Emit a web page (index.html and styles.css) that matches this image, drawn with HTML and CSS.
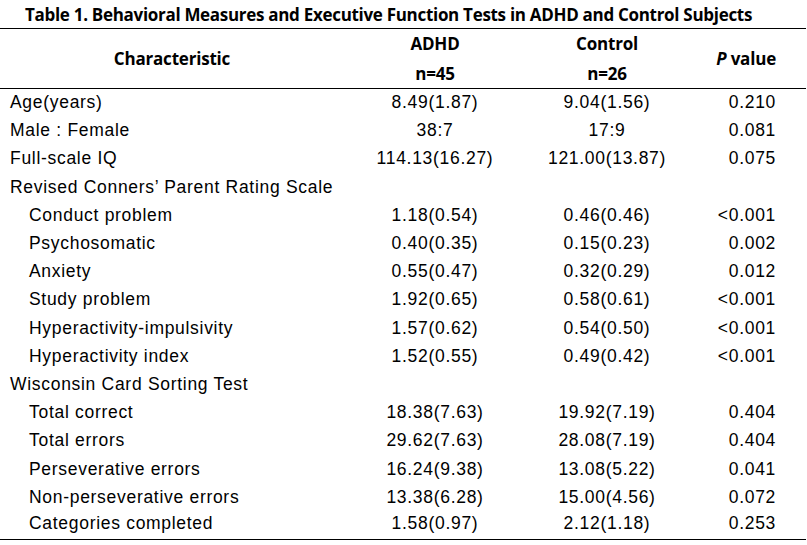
FILE: index.html
```html
<!DOCTYPE html>
<html>
<head>
<meta charset="utf-8">
<link rel="stylesheet" href="styles.css">
</head>
<body>
<div class="title">Table 1. Behavioral Measures and Executive Function Tests in ADHD and Control Subjects</div>
<table class="data">
  <colgroup>
    <col class="c-label">
    <col class="c-adhd">
    <col class="c-ctrl">
    <col class="c-p">
  </colgroup>
  <thead>
    <tr class="h1">
      <th rowspan="2" class="h-char">Characteristic</th>
      <th>ADHD</th>
      <th>Control</th>
      <th rowspan="2" class="h-p"><i>P</i> value</th>
    </tr>
    <tr class="h2">
      <th>n=45</th>
      <th>n=26</th>
    </tr>
  </thead>
  <tbody>
    <tr><td class="lab">Age(years)</td><td>8.49(1.87)</td><td>9.04(1.56)</td><td class="p">0.210</td></tr>
    <tr><td class="lab">Male : Female</td><td>38:7</td><td>17:9</td><td class="p">0.081</td></tr>
    <tr><td class="lab">Full-scale IQ</td><td>114.13(16.27)</td><td>121.00(13.87)</td><td class="p">0.075</td></tr>
    <tr><td class="lab">Revised Conners’ Parent Rating Scale</td><td></td><td></td><td class="p"></td></tr>
    <tr><td class="lab sub">Conduct problem</td><td>1.18(0.54)</td><td>0.46(0.46)</td><td class="p">&lt;0.001</td></tr>
    <tr><td class="lab sub">Psychosomatic</td><td>0.40(0.35)</td><td>0.15(0.23)</td><td class="p">0.002</td></tr>
    <tr><td class="lab sub">Anxiety</td><td>0.55(0.47)</td><td>0.32(0.29)</td><td class="p">0.012</td></tr>
    <tr><td class="lab sub">Study problem</td><td>1.92(0.65)</td><td>0.58(0.61)</td><td class="p">&lt;0.001</td></tr>
    <tr><td class="lab sub">Hyperactivity-impulsivity</td><td>1.57(0.62)</td><td>0.54(0.50)</td><td class="p">&lt;0.001</td></tr>
    <tr><td class="lab sub">Hyperactivity index</td><td>1.52(0.55)</td><td>0.49(0.42)</td><td class="p">&lt;0.001</td></tr>
    <tr><td class="lab">Wisconsin Card Sorting Test</td><td></td><td></td><td class="p"></td></tr>
    <tr><td class="lab sub">Total correct</td><td>18.38(7.63)</td><td>19.92(7.19)</td><td class="p">0.404</td></tr>
    <tr><td class="lab sub">Total errors</td><td>29.62(7.63)</td><td>28.08(7.19)</td><td class="p">0.404</td></tr>
    <tr><td class="lab sub">Perseverative errors</td><td>16.24(9.38)</td><td>13.08(5.22)</td><td class="p">0.041</td></tr>
    <tr><td class="lab sub">Non-perseverative errors</td><td>13.38(6.28)</td><td>15.00(4.56)</td><td class="p">0.072</td></tr>
    <tr><td class="lab sub">Categories completed</td><td>1.58(0.97)</td><td>2.12(1.18)</td><td class="p">0.253</td></tr>
  </tbody>
</table>
</body>
</html>
```

FILE: styles.css
```css
html, body {
  margin: 0;
  padding: 0;
  background: #ffffff;
  color: #000000;
}

.title {
  height: 28px;
  line-height: 30px;
  padding-left: 25px;
  font-family: "Open Sans", "Liberation Sans", sans-serif;
  font-weight: 700;
  font-size: 17px;
  letter-spacing: -0.3px;
  white-space: nowrap;
}

.data {
  width: 806px;
  border-collapse: collapse;
  font-family: "Liberation Sans", Arial, sans-serif;
  font-size: 17.5px;
  letter-spacing: 0.7px;
}

.c-label { width: 350px; }
.c-adhd { width: 170px; }
.c-ctrl { width: 174px; }
.c-p { width: 112px; }

.data thead {
  border-top: 1px solid #000;
  border-bottom: 1px solid #000;
}

.data th {
  font-family: "Open Sans", "Liberation Sans", sans-serif;
  font-weight: 700;
  font-size: 17px;
  letter-spacing: -0.2px;
  text-align: center;
  padding: 0;
  height: 29.5px;
}

.data th.h-p {
  text-align: right;
  padding-right: 30px;
}

.data th.h-char {
  text-align: center;
  padding-right: 6px;
}

.data tbody tr {
  height: 28.2px;
}

.data tbody tr:last-child {
  border-bottom: 1px solid #000;
}

.data tbody tr:last-child td {
  padding-bottom: 4px;
}

.data td {
  padding: 0;
  text-align: center;
  white-space: nowrap;
}

.data td.lab {
  text-align: left;
  padding-left: 10px;
}

.data td.sub {
  padding-left: 29px;
}

.data td.p {
  text-align: right;
  padding-right: 30px;
}
```
